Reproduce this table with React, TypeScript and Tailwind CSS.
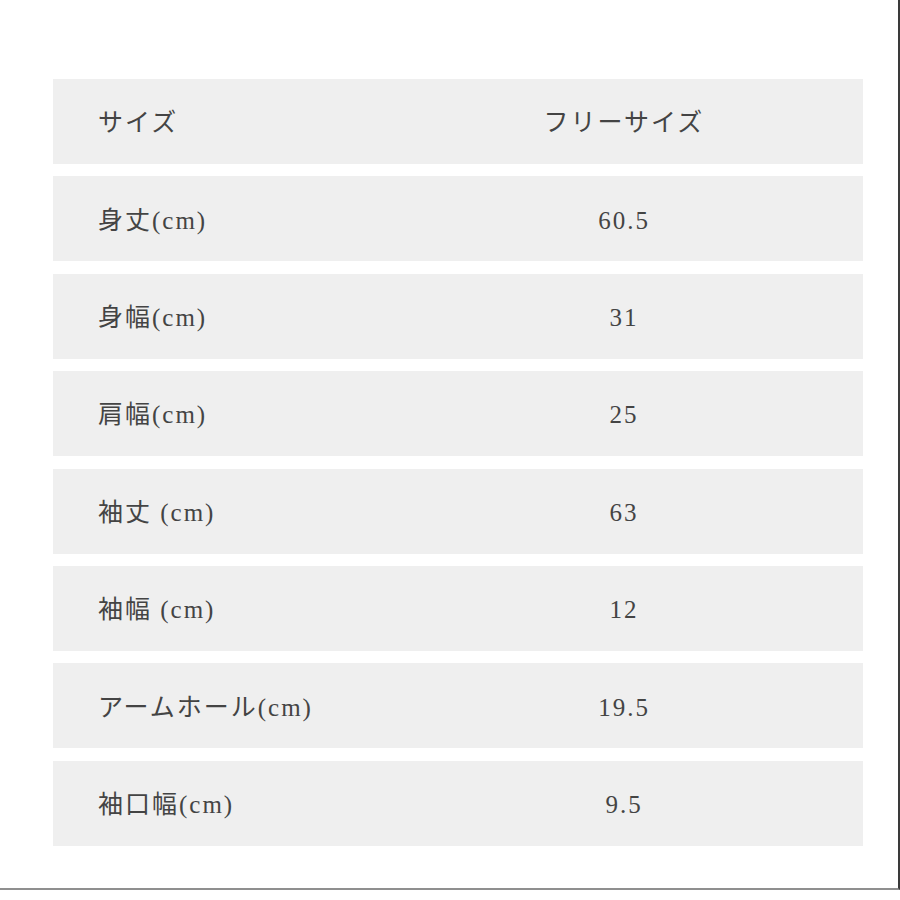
import React from 'react';

const rows: { label: string; value: string }[] = [
  { label: 'サイズ', value: 'フリーサイズ' },
  { label: '身丈(cm)', value: '60.5' },
  { label: '身幅(cm)', value: '31' },
  { label: '肩幅(cm)', value: '25' },
  { label: '袖丈 (cm)', value: '63' },
  { label: '袖幅 (cm)', value: '12' },
  { label: 'アームホール(cm)', value: '19.5' },
  { label: '袖口幅(cm)', value: '9.5' },
];

const App: React.FC = () => {
  return (
    <div className="w-[900px] h-[900px] bg-white overflow-hidden">
      <div className="h-[890px] border-r-2 border-r-[#3a3a3a] border-b-2 border-b-[#8f8f8f]">
        <div
          className="flex flex-col gap-[12.4px] pt-[79px] pl-[53px] text-[#444444] text-[25px] tracking-[2px]"
          style={{ fontFamily: '"Liberation Serif", "Noto Sans CJK JP", serif' }}
        >
          {rows.map((row) => (
            <div key={row.label} className="w-[810px] h-[85px] pt-[3px] bg-[#efefef] flex items-center">
              <div className="w-[332px] pl-[45px]">{row.label}</div>
              <div className="flex-1 text-center">{row.value}</div>
            </div>
          ))}
        </div>
      </div>
    </div>
  );
};

export default App;
